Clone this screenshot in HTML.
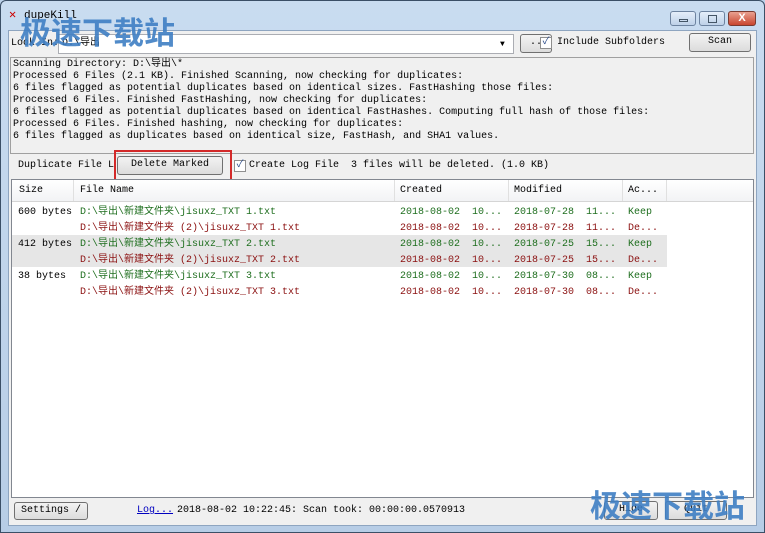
<!DOCTYPE html><html><head><style>
*{margin:0;padding:0;box-sizing:border-box}
body{width:765px;height:533px;overflow:hidden;background:#bcd2ea;font-family:"Liberation Mono","Noto Sans CJK SC",monospace;font-size:10px;color:#000;position:relative}
.a{position:absolute}
.frame{left:0;top:0;width:765px;height:533px;background:linear-gradient(#c9dcf0,#b7cde6);border:1px solid #3b4f66;border-radius:6px 6px 0 0}
.client{left:8px;top:30px;width:749px;height:496px;background:#f0f0f0;border:1px solid #8ea5c0}
.btn{position:absolute;border:1px solid #707070;border-radius:3px;background:linear-gradient(#f3f3f3,#dcdcdc);text-align:center;line-height:16px}
.t{position:absolute;white-space:pre;line-height:12px}
.g{color:#1e6e1e}.r{color:#8b1010}
.wm{position:absolute;font-family:"Noto Sans CJK SC",sans-serif;font-size:31px;font-weight:bold;color:#3f7fc4;letter-spacing:0px;opacity:.9}
.cb{position:absolute;width:12px;height:12px;border:1px solid #8f8f8f;background:#fff;font-size:10px;line-height:10px;text-align:center;color:#2a4b8a}
</style></head><body>
<div class="a frame"></div>
<div class="a" style="left:9px;top:10px;width:10px;height:10px;color:#c00;font-size:12px;line-height:10px">✕</div>
<div class="t" style="left:24px;top:10px;font-size:11px">dupeKill</div>
<div class="a" style="left:670px;top:11px;width:26px;height:15px;border:1px solid #6d83a0;border-radius:3px;background:linear-gradient(#e4eefa,#bed1e8)"><div class="a" style="left:8px;top:7px;width:9px;height:3px;border:1px solid #456"></div></div>
<div class="a" style="left:699px;top:11px;width:26px;height:15px;border:1px solid #6d83a0;border-radius:3px;background:linear-gradient(#e4eefa,#bed1e8)"><div class="a" style="left:8px;top:3px;width:9px;height:8px;border:1px solid #456"></div></div>
<div class="a" style="left:728px;top:11px;width:28px;height:15px;border:1px solid #7a3a30;border-radius:3px;background:linear-gradient(#e9a090,#c9452f);color:#fff;font-weight:bold;text-align:center;line-height:13px;font-family:'Liberation Sans';font-size:11px">X</div>
<div class="a client"></div>
<div class="t" style="left:11px;top:38px">Look In:</div>
<div class="a" style="left:58px;top:34px;width:456px;height:20px;background:#fff;border:1px solid #abadb3"></div>
<div class="t" style="left:62px;top:38px">D:\导出</div>
<div class="t" style="left:500px;top:39px;font-size:8px">▼</div>
<div class="btn" style="left:520px;top:34px;width:32px;height:19px">..</div>
<div class="cb" style="left:540px;top:37px">✓</div>
<div class="t" style="left:557px;top:37px">Include Subfolders</div>
<div class="btn" style="left:689px;top:33px;width:62px;height:19px">Scan</div>
<div class="a" style="left:10px;top:57px;width:744px;height:97px;border:1px solid #a0a0a0;background:#f0f0f0"></div>
<div class="t" style="left:13px;top:59px">Scanning Directory: D:\导出\*
Processed 6 Files (2.1 KB). Finished Scanning, now checking for duplicates:
6 files flagged as potential duplicates based on identical sizes. FastHashing those files:
Processed 6 Files. Finished FastHashing, now checking for duplicates:
6 files flagged as potential duplicates based on identical FastHashes. Computing full hash of those files:
Processed 6 Files. Finished hashing, now checking for duplicates:
6 files flagged as duplicates based on identical size, FastHash, and SHA1 values.</div>
<div class="t" style="left:18px;top:160px">Duplicate File L</div>
<div class="btn" style="left:117px;top:156px;width:106px;height:19px">Delete Marked</div>
<div class="a" style="left:114px;top:150px;width:118px;height:34px;border:2px solid #d32a2a"></div>
<div class="cb" style="left:234px;top:160px">✓</div>
<div class="t" style="left:249px;top:160px">Create Log File  3 files will be deleted. (1.0 KB)</div>
<div class="a" style="left:11px;top:179px;width:743px;height:319px;background:#fff;border:1px solid #828790"></div>
<div class="a" style="left:12px;top:180px;width:741px;height:22px;background:linear-gradient(#fff,#f2f3f5);border-bottom:1px solid #d5d5d5"></div>
<div class="a" style="left:73px;top:180px;width:1px;height:21px;background:#e0e0e0"></div>
<div class="a" style="left:394px;top:180px;width:1px;height:21px;background:#e0e0e0"></div>
<div class="a" style="left:508px;top:180px;width:1px;height:21px;background:#e0e0e0"></div>
<div class="a" style="left:622px;top:180px;width:1px;height:21px;background:#e0e0e0"></div>
<div class="a" style="left:666px;top:180px;width:1px;height:21px;background:#e0e0e0"></div>
<div class="t" style="left:19px;top:185px">Size</div>
<div class="t" style="left:80px;top:185px">File Name</div>
<div class="t" style="left:400px;top:185px">Created</div>
<div class="t" style="left:514px;top:185px">Modified</div>
<div class="t" style="left:628px;top:185px">Ac...</div>
<div class="a" style="left:12px;top:235px;width:655px;height:32px;background:#e6e6e6"></div>
<div class="t" style="left:18px;top:205px;line-height:16px">600 bytes

412 bytes

38 bytes</div>
<div class="t" style="left:80px;top:205px;line-height:16px"><span class="g">D:\导出\新建文件夹\jisuxz_TXT 1.txt</span>
<span class="r">D:\导出\新建文件夹 (2)\jisuxz_TXT 1.txt</span>
<span class="g">D:\导出\新建文件夹\jisuxz_TXT 2.txt</span>
<span class="r">D:\导出\新建文件夹 (2)\jisuxz_TXT 2.txt</span>
<span class="g">D:\导出\新建文件夹\jisuxz_TXT 3.txt</span>
<span class="r">D:\导出\新建文件夹 (2)\jisuxz_TXT 3.txt</span></div>
<div class="t" style="left:400px;top:205px;line-height:16px"><span class="g">2018-08-02  10...  2018-07-28  11...  Keep</span>
<span class="r">2018-08-02  10...  2018-07-28  11...  De...</span>
<span class="g">2018-08-02  10...  2018-07-25  15...  Keep</span>
<span class="r">2018-08-02  10...  2018-07-25  15...  De...</span>
<span class="g">2018-08-02  10...  2018-07-30  08...  Keep</span>
<span class="r">2018-08-02  10...  2018-07-30  08...  De...</span></div>
<div class="btn" style="left:14px;top:502px;width:74px;height:18px">Settings /</div>
<div class="t" style="left:137px;top:505px;color:#0000c0;text-decoration:underline">Log...</div>
<div class="t" style="left:177px;top:505px">2018-08-02 10:22:45: Scan took: 00:00:00.0570913</div>
<div class="btn" style="left:604px;top:501px;width:54px;height:19px">Hide</div>
<div class="btn" style="left:665px;top:501px;width:62px;height:19px">Quit</div>
<div class="wm" style="left:20px;top:8px">极速下载站</div>
<div class="wm" style="left:590px;top:481px">极速下载站</div>
</body></html>
